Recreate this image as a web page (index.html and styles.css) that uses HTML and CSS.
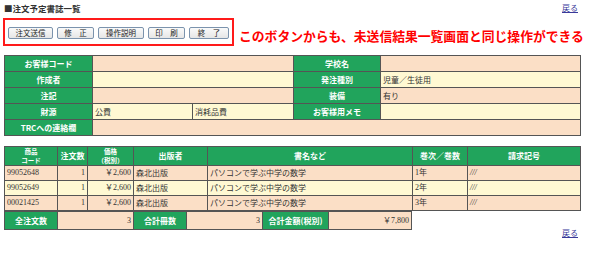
FILE: index.html
```html
<!DOCTYPE html>
<html lang="ja">
<head>
<meta charset="utf-8">
<link rel="stylesheet" href="styles.css">
</head>
<body>
<div class="page">
  <div class="topbar">
    <span class="title">■注文予定書誌一覧</span>
    <a class="back" href="#">戻る</a>
  </div>
  <div class="actions">
    <div class="btnbox">
      <button class="btn w45">注文送信</button>
      <button class="btn w37">修　正</button>
      <button class="btn w46">操作説明</button>
      <button class="btn w37">印　刷</button>
      <button class="btn w40">終　了</button>
    </div>
    <span class="note">このボタンからも、未送信結果一覧画面と同じ操作ができる</span>
  </div>

  <table class="grid info">
    <colgroup><col class="c88"><col class="c100"><col class="c101"><col class="c87"><col></colgroup>
    <tr class="peach"><th>お客様コード</th><td colspan="2"></td><th>学校名</th><td></td></tr>
    <tr class="cream"><th>作成者</th><td colspan="2"></td><th>発注種別</th><td>児童／生徒用</td></tr>
    <tr class="peach"><th>注記</th><td colspan="2"></td><th>装備</th><td>有り</td></tr>
    <tr class="cream"><th>財源</th><td>公費</td><td>消耗品費</td><th>お客様用メモ</th><td></td></tr>
    <tr class="peach"><th>TRCへの連絡欄</th><td colspan="4"></td></tr>
  </table>

  <table class="grid items">
    <colgroup><col class="c53"><col class="c30"><col class="c46"><col class="c74"><col class="c205"><col class="c55"><col></colgroup>
    <tr class="head"><th><span class="two">商品</span><span class="two">コード</span></th><th>注文数</th><th><span class="two">価格</span><span class="two">（税別）</span></th><th>出版者</th><th>書名など</th><th>巻次／巻数</th><th>請求記号</th></tr>
    <tr class="peach"><td class="num">99052648</td><td class="r num">1</td><td class="r num">￥2,600</td><td>森北出版</td><td>パソコンで学ぶ中学の数学</td><td class="num">1年</td><td class="num it">///</td></tr>
    <tr class="cream"><td class="num">99052649</td><td class="r num">1</td><td class="r num">￥2,600</td><td>森北出版</td><td>パソコンで学ぶ中学の数学</td><td class="num">2年</td><td class="num it">///</td></tr>
    <tr class="peach"><td class="num">00021425</td><td class="r num">1</td><td class="r num">￥2,600</td><td>森北出版</td><td>パソコンで学ぶ中学の数学</td><td class="num">3年</td><td class="num it">///</td></tr>
  </table>
  <table class="grid totals">
    <colgroup><col class="c53"><col class="c76"><col class="c53"><col class="c76"><col class="c66"><col></colgroup>
    <tr class="peach"><th>全注文数</th><td class="r num">3</td><th>合計冊数</th><td class="r num">3</td><th>合計金額(税別)</th><td class="r num">￥7,800</td></tr>
  </table>

  <div class="footer"><a class="back" href="#">戻る</a></div>
</div>
</body>
</html>
```

FILE: styles.css
```css
* { box-sizing: border-box; }
html, body { margin: 0; background: #fff; }
body {
  font-family: "Noto Sans CJK JP", "Noto Sans", sans-serif;
  color: #222;
  width: 600px;
  height: 255px;
  overflow: hidden;
}
.page { padding: 1px 19px 0 4px; }

.topbar {
  display: flex;
  justify-content: space-between;
  align-items: center;
  height: 13px;
  padding-right: 3px;
}
.title { font-size: 8.5px; font-weight: bold; color: #333; line-height: 12px; }
.back { font-size: 8px; color: #3a3a9a; text-decoration: underline; line-height: 10px; }

.actions {
  display: flex;
  align-items: center;
  margin-top: 4px;
  margin-left: -1px;
}
.btnbox {
  width: 233px;
  height: 28px;
  border: 2px solid #ff1a1a;
  display: flex;
  align-items: center;
  gap: 4px;
  padding: 1px 3px 0 3px;
}
.btn {
  height: 12px;
  padding: 0;
  font-family: inherit;
  font-size: 7.5px;
  line-height: 10px;
  color: #222;
  background: linear-gradient(#fafafa, #e6e6e6);
  border: 1px solid #7b93ad;
  border-radius: 2px;
}
.w45 { width: 45px; }
.w37 { width: 37px; }
.w46 { width: 46px; }
.w40 { width: 40px; }
.note {
  margin-left: 5px;
  margin-top: 7px;
  font-size: 12.8px;
  font-weight: bold;
  color: #f00;
  white-space: nowrap;
  letter-spacing: 0;
}

.grid {
  border-collapse: collapse;
  table-layout: fixed;
  border: 1px solid #8a8a8a;
}
.grid th, .grid td {
  border: 1px solid #555;
  padding: 0 2px;
  font-size: 8px;
  line-height: 10px;
  white-space: nowrap;
  overflow: hidden;
}
.grid th {
  background: #21a45c;
  color: #fff;
  font-weight: bold;
  text-align: center;
}
.grid td { text-align: left; color: #333; }
.peach td { background: #fbdfc6; }
.cream td { background: #fff9d3; }

.info { width: 577px; margin-top: 9px; }
.info tr { height: 16px; }
.c88 { width: 88px; } .c100 { width: 100px; } .c101 { width: 101px; } .c87 { width: 87px; }

.items { width: 577px; margin-top: 10px; }
.items .head { height: 19px; }
.items .head th { padding: 0; }
.two { display: block; font-size: 6.5px; line-height: 9.5px; height: 9px; overflow: visible; }
.items tr { height: 15px; }
.c53 { width: 53px; } .c30 { width: 30px; } .c46 { width: 46px; } .c74 { width: 74px; }
.c205 { width: 205px; } .c55 { width: 55px; } .c76 { width: 76px; } .c66 { width: 66px; }

.totals { width: 408px; border-top: none; }
.totals tr { height: 18px; }
.totals th { font-size: 8px; }

.num { font-family: "Liberation Serif", "Noto Sans CJK JP", serif; font-size: 8px; }
.grid td.r { text-align: right; }
.it { font-style: italic; }

.footer { display: flex; justify-content: flex-end; padding-right: 3px; margin-top: -2px; }
```
